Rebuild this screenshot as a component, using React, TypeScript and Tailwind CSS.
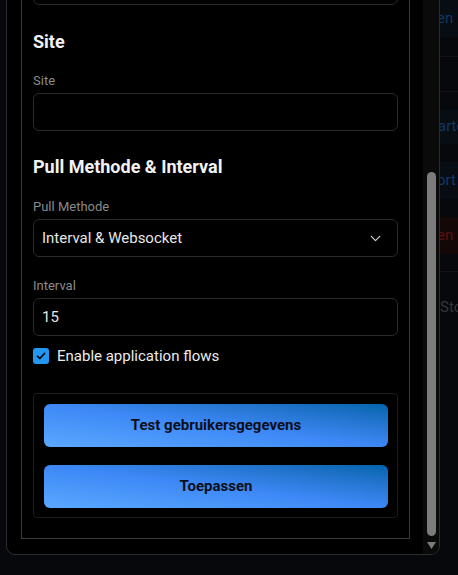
import React from "react";

function Field({ label, children }: { label: string; children: React.ReactNode }) {
  return (
    <div className="flex flex-col">
      <div className="h-[18px] text-[13px] leading-[18px] text-[#8a8a8a]">{label}</div>
      <div className="mt-[3px]">{children}</div>
    </div>
  );
}

export default function App() {
  const font = { fontFamily: "Roboto, 'Noto Sans', Arial, sans-serif" };
  return (
    <div className="h-[575px] w-[458px] overflow-hidden bg-[#07080b] flex" style={font}>
      {/* modal */}
      <div className="w-[440px] shrink-0 pl-[6px]">
        <div className="-mt-[20px] h-[575px] rounded-[9px] border border-[#2c2c2e] bg-black flex overflow-hidden">
          <div className="flex-1 pl-[14px] pr-[13px] pb-[15px] flex flex-col justify-end">
            <div className="border border-[#3c3c3c] border-t-0 px-[11px] pb-[20px] flex flex-col">
              <div className="h-[38px] rounded-[6px] border border-[#2a2a2a]" />
              <div className="mt-[25px] h-[24px] text-[18px] leading-[24px] font-bold text-[#f2f2f2]">Site</div>
              <div className="mt-[18px]">
                <Field label="Site">
                  <div className="h-[38px] rounded-[6px] border border-[#2a2a2a]" />
                </Field>
              </div>
              <div className="mt-[24px] h-[24px] text-[18px] leading-[24px] font-bold text-[#f2f2f2]">
                Pull Methode &amp; Interval
              </div>
              <div className="mt-[19px]">
                <Field label="Pull Methode">
                  <div className="h-[38px] rounded-[6px] border border-[#2a2a2a] flex items-center justify-between pl-[8px] pr-[13px]">
                    <span className="text-[15px] text-[#e6e6e6]">Interval &amp; Websocket</span>
                    <svg width="17" height="17" viewBox="0 0 24 24" fill="none" stroke="#cfcfcf" strokeWidth="1.8" strokeLinecap="round" strokeLinejoin="round">
                      <path d="m6 9 6 6 6-6" />
                    </svg>
                  </div>
                </Field>
              </div>
              <div className="mt-[20px]">
                <Field label="Interval">
                  <div className="h-[38px] rounded-[6px] border border-[#2a2a2a] flex items-center pl-[8px]">
                    <span className="text-[15px] text-[#e6e6e6]">15</span>
                  </div>
                </Field>
              </div>
              <div className="mt-[10px] h-[20px] flex items-center gap-[8px]">
                <div className="w-[16px] h-[16px] rounded-[3px] bg-[#2196f3] flex items-center justify-center">
                  <svg width="12" height="12" viewBox="0 0 24 24" fill="none" stroke="#050505" strokeWidth="3.5" strokeLinecap="round" strokeLinejoin="round">
                    <path d="M5 12.5l4.5 4.5L19 7" />
                  </svg>
                </div>
                <span className="text-[15px] text-[#ececec]">Enable application flows</span>
              </div>
              <div className="mt-[27px] rounded-[4px] border border-[#1c1c1c] pt-[10px] pb-[9px] pl-[10px] pr-[9px] flex flex-col gap-[18px]">
                <button className="h-[43px] rounded-[6px] bg-linear-to-tr from-[#5aa8ff] via-[#3d88f6] to-[#0064ad] text-[15px] font-bold text-[#0e0f1a]">
                  Test gebruikersgegevens
                </button>
                <button className="h-[43px] rounded-[6px] bg-linear-to-tr from-[#5aa8ff] via-[#3d88f6] to-[#0064ad] text-[15px] font-bold text-[#0e0f1a]">
                  Toepassen
                </button>
              </div>
            </div>
          </div>
          {/* scrollbar */}
          <div className="w-[16px] bg-[#0a0a0a] flex flex-col items-center justify-end pb-[5px]">
            <div className="w-[9px] h-[364px] rounded-full bg-[#7b7b7b]" />
            <svg className="mt-[6px]" width="9" height="7" viewBox="0 0 9 7">
              <path d="M0 0 H9 L4.5 7 Z" fill="#7b7b7b" />
            </svg>
          </div>
        </div>
      </div>
      {/* dimmed background content */}
      <div className="flex-1 overflow-hidden flex flex-col text-[15px] whitespace-nowrap">
        <div className="h-[37px] bg-[#080c13] flex items-end pb-[8px] -ml-[3px] text-[#0f3866]">en</div>
        <div className="h-[20px] border-b border-[#101010]" />
        <div className="h-[35px] border-b border-[#101010]" />
        <div className="h-[17px]" />
        <div className="h-[35px] bg-[#080c13] flex items-center -ml-[2px] text-[#0f3866]">arte</div>
        <div className="h-[18px]" />
        <div className="h-[37px] bg-[#080c13] flex items-center -ml-[3px] text-[#0f3866]">ort</div>
        <div className="h-[18px]" />
        <div className="h-[37px] bg-[#140707] flex items-center -ml-[3px] text-[#5c1010]">en</div>
        <div className="h-[18px] border-b border-[#121212]" />
        <div className="h-[70px] flex items-center text-[#363636]">Sto</div>
      </div>
    </div>
  );
}
